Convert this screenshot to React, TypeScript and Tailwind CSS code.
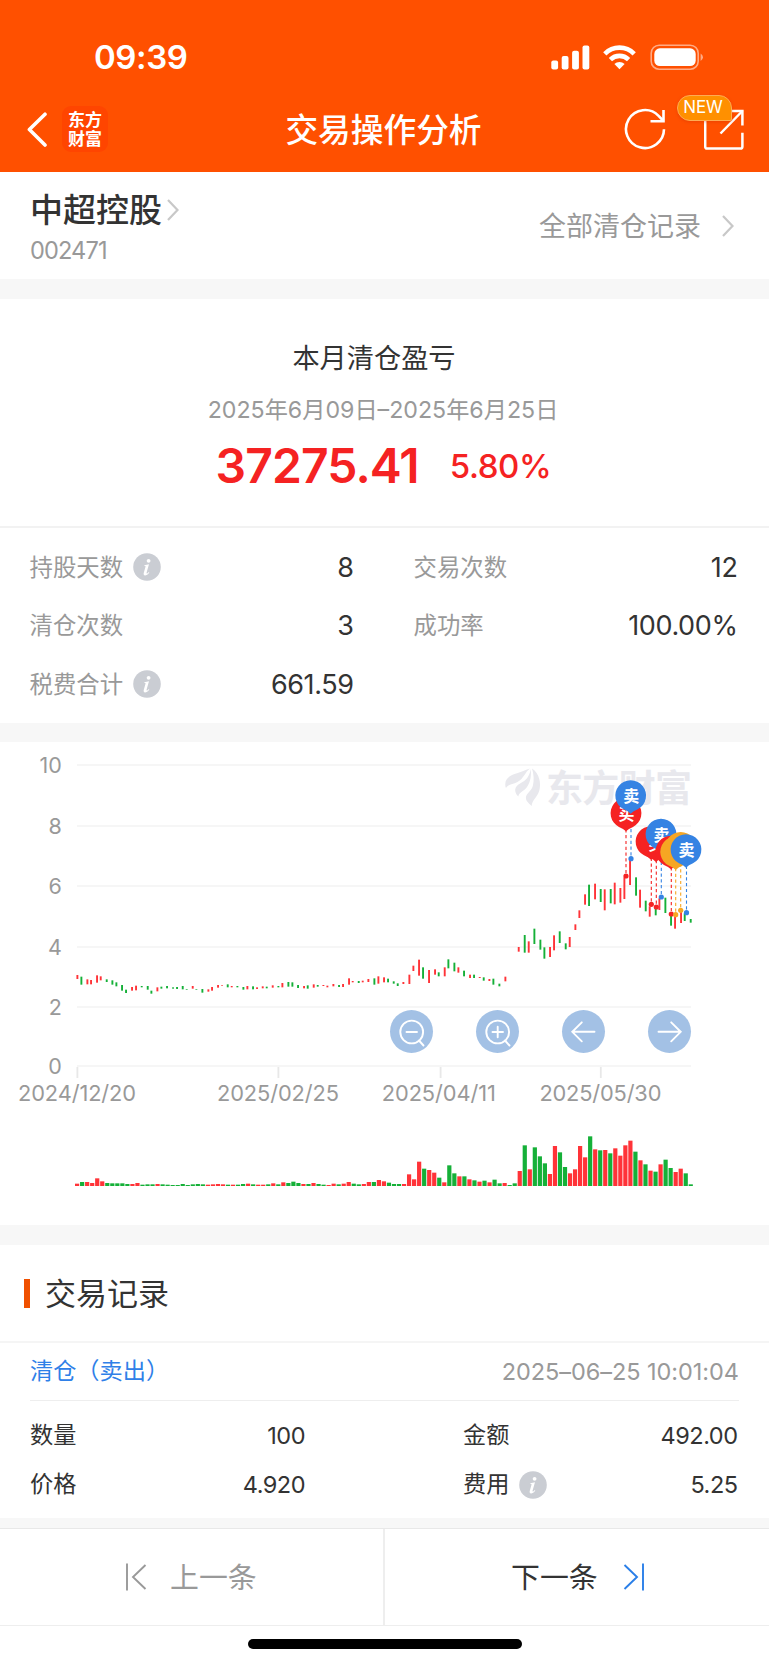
import type { ReactNode } from "react";

const RED = "#ff3338";
const GREEN = "#15b038";

type Tone = "r" | "g";
type Mark = [number, number, number, Tone];

const spring: Mark[] = [
  [52, 75, 87, "r"], [64, 80, 104, "g"], [82, 88, 103, "r"], [93, 90, 103, "r"], [111, 76, 98, "r"],
  [122, 79, 91, "r"], [140, 88, 96, "g"], [157, 91, 104, "g"], [169, 97, 109, "g"], [186, 105, 122, "g"],
  [198, 119, 129, "g"], [216, 111, 122, "r"], [228, 107, 121, "r"], [245, 108, 112, "g"], [263, 108, 119, "g"],
  [274, 122, 131, "g"], [292, 112, 124, "r"], [304, 110, 116, "g"], [321, 108, 115, "g"], [339, 112, 116, "g"],
  [351, 111, 117, "g"], [368, 108, 118, "g"], [380, 117, 119, "g"], [398, 108, 116, "r"], [409, 117, 119, "g"],
  [427, 117, 128, "g"], [445, 118, 125, "r"], [456, 111, 122, "r"], [474, 105, 113, "r"], [486, 105, 107, "r"],
  [503, 103, 112, "g"], [515, 108, 112, "r"], [532, 108, 112, "g"], [550, 111, 119, "g"], [562, 108, 118, "r"],
  [579, 109, 118, "g"], [591, 112, 117, "r"], [608, 109, 115, "r"], [620, 110, 115, "g"], [638, 106, 113, "r"],
  [655, 108, 112, "g"], [667, 99, 112, "r"], [685, 96, 110, "g"], [697, 97, 110, "g"], [714, 105, 114, "g"],
  [732, 108, 115, "r"], [743, 106, 116, "g"], [761, 103, 113, "r"], [773, 105, 110, "g"], [790, 105, 108, "r"],
  [802, 107, 112, "r"], [820, 102, 109, "r"], [837, 105, 111, "g"], [849, 102, 111, "r"], [867, 85, 104, "r"],
  [878, 93, 97, "r"], [896, 93, 99, "g"], [908, 92, 97, "r"], [925, 87, 96, "r"], [943, 85, 104, "g"],
  [955, 79, 101, "r"], [972, 82, 97, "r"], [984, 86, 97, "g"],
];

const summer: Mark[] = [
  [41, 724, 731, "g"], [53, 730, 738, "g"], [70, 726, 732, "r"], [88, 704, 732, "r"], [100, 677, 693, "r"],
  [117, 659, 707, "r"], [129, 682, 716, "g"], [147, 690, 729, "r"], [165, 688, 704, "r"], [176, 697, 709, "g"],
  [194, 682, 709, "r"], [205, 658, 685, "g"], [223, 668, 694, "g"], [235, 682, 698, "r"], [252, 692, 709, "g"],
  [270, 704, 714, "r"], [282, 704, 714, "g"], [299, 711, 714, "r"], [311, 712, 722, "g"], [328, 717, 723, "r"],
  [340, 716, 734, "g"], [358, 731, 739, "g"], [376, 710, 724, "r"], [416, 621, 635, "r"], [434, 585, 638, "g"],
  [446, 604, 638, "r"], [463, 566, 612, "g"], [481, 599, 629, "g"], [493, 622, 656, "g"], [510, 621, 651, "r"],
  [522, 586, 631, "r"], [539, 574, 609, "g"], [557, 610, 628, "g"], [569, 591, 621, "r"], [586, 553, 570, "r"],
  [598, 511, 534, "r"], [615, 463, 494, "r"], [627, 434, 498, "g"], [645, 431, 478, "r"], [662, 447, 486, "g"],
  [674, 448, 511, "r"], [692, 447, 490, "g"], [704, 428, 493, "r"], [721, 444, 488, "r"], [733, 412, 477, "r"],
  [750, 358, 435, "r"], [768, 412, 467, "g"], [780, 449, 503, "r"], [797, 482, 514, "g"], [809, 499, 530, "r"],
  [827, 500, 526, "g"], [838, 475, 510, "r"], [856, 473, 519, "g"], [873, 520, 557, "g"], [885, 525, 566, "r"],
  [903, 515, 549, "r"], [914, 520, 543, "g"], [932, 537, 548, "g"],
];

const candles: Mark[] = [
  ...spring.map(([x, a, b, t]): Mark => [60 + x / 3, 208 + a / 3, 208 + b / 3, t]),
  ...summer.map(([x, a, b, t]): Mark => [380 + x / 3, a / 3 - 2, b / 3 - 2, t]),
];

const volumes =
  "7r 12g 12r 9r 23r 14r 9g 8g 8g 8g 6g 6r 9r 4g 5g 5g 6r 5g 4g 3g 3g 6g 3g 5g 6g 5g 4r 5r 6r 5r 4g 4r 4g 6g 7r 5g 4r 4r 5g 8r 5g 11r 9g 13g 9g 6r 6g 9r 6g 4g 3r 7r 5g 7r 12r 7g 5g 6r 12r 12g 18r 14r 10g 6g 6g 6r 35r 20r 73r 52g 48r 40r 25g 11r 62g 38g 29r 29g 20r 17g 13r 16g 11r 19g 8g 9r 3g 8g 45r 122g 50r 116g 89g 68g 36r 120r 101g 57g 38r 50r 120r 86r 149g 110r 107g 108r 98g 113r 91r 122r 136r 103g 77r 65g 46r 43g 65r 79g 54g 42r 52r 38g 5g"
    .split(" ")
    .map((v) => ({ h: parseInt(v, 10) / 3, tone: v.endsWith("r") ? RED : GREEN }));

const PIN_RED = "#f52222";
const PIN_BLUE = "#3583e3";
const PIN_ORANGE = "#f6a623";

const pins = [
  { x: 626, y: 71.3, dx: 626, dy: 134, c: PIN_RED, t: "买" },
  { x: 630.7, y: 53.7, dx: 631, dy: 116.7, c: PIN_BLUE, t: "卖" },
  { x: 651, y: 99.7, dx: 651.3, dy: 162.3, c: PIN_RED, t: "" },
  { x: 656, y: 102, dx: 656.3, dy: 165, c: PIN_RED, t: "买" },
  { x: 661, y: 92.3, dx: 661.3, dy: 155, c: PIN_BLUE, t: "卖" },
  { x: 671, y: 109.3, dx: 671.3, dy: 172, c: PIN_RED, t: "" },
  { x: 675.7, y: 110, dx: 675.7, dy: 172.7, c: PIN_ORANGE, t: "" },
  { x: 680.7, y: 105.5, dx: 680.7, dy: 168.3, c: PIN_ORANGE, t: "" },
  { x: 686, y: 107.7, dx: 686.5, dy: 170.7, c: PIN_BLUE, t: "卖" },
];

const levels = [
  { v: "10", y: 23 }, { v: "8", y: 84 }, { v: "6", y: 144 }, { v: "4", y: 205 }, { v: "2", y: 265 }, { v: "0", y: 324 },
];

const dates = [
  { t: "2024/12/20", x: 77.3, l: 77, w: 118 },
  { t: "2025/02/25", x: 278.3, l: 278, w: 122 },
  { t: "2025/04/11", x: 440.5, l: 438.8, w: 114 },
  { t: "2025/05/30", x: 600.7, l: 600.4, w: 122 },
];

function Info() {
  return (
    <svg className="block h-7 w-7 shrink-0" viewBox="0 0 28 28">
      <circle cx="14" cy="14" r="13.8" fill="#cacdd3" />
      <circle cx="15.6" cy="7.8" r="1.9" fill="#fff" />
      <path d="M11.2 12.2 C13 12 14.5 11.6 16 11.2 L13.6 19.6 C13.3 21 14.2 20.6 15.8 18.9 L16.3 19.4 C14.8 21.6 13.3 22.4 12.1 22.4 C10.6 22.4 10.4 21.3 10.8 19.8 L12.5 13.8 C12.7 13 12.3 12.8 11.1 12.8 Z" fill="#fff" />
    </svg>
  );
}

function Chevron({ className }: { className: string }) {
  return (
    <svg className={className} viewBox="0 0 12 22" fill="none" stroke="#c8c8c8" strokeWidth="2.2">
      <path d="M1 1 L10.5 11 L1 21" />
    </svg>
  );
}

function Header() {
  return (
    <header className="h-[172px] shrink-0 bg-[#ff5000] text-white">
      <div className="flex h-[86px] items-center justify-between pt-[29px] pr-[64px] pl-[94px]">
        <span className="text-[33px] leading-none font-semibold tracking-[-0.4px]">09:39</span>
        <div className="flex items-center">
          <svg className="h-[25px] w-[39px]" viewBox="0 0 39 25" fill="#fff">
            <rect x="0.3" y="15.5" width="6.8" height="9" rx="2" />
            <rect x="10.7" y="11" width="6.8" height="13.5" rx="2" />
            <rect x="21.1" y="5.7" width="6.8" height="18.8" rx="2" />
            <rect x="31.5" y="0.5" width="6.8" height="24" rx="2" />
          </svg>
          <svg className="ml-[13px] h-[25px] w-[33px]" viewBox="0 0 33 25" fill="none" stroke="#fff" strokeWidth="4.6">
            <path d="M1.8 8.8 C10 0.6 23 0.6 31.2 8.8" />
            <path d="M7.4 14.6 C12.5 9.6 20.5 9.6 25.6 14.6" />
            <path d="M11.4 19 C14.2 16.2 18.8 16.2 21.6 19 L16.5 24.2 Z" fill="#fff" stroke="none" />
          </svg>
          <svg className="ml-[14px] h-[27px] w-[55px]" viewBox="0 0 55 27">
            <rect x="1.2" y="1.2" width="47" height="24" rx="8" fill="none" stroke="#ffab85" strokeWidth="1.6" />
            <rect x="4.3" y="4.3" width="41.4" height="17.8" rx="5.6" fill="#fff" />
            <path d="M50.6 9.5 Q53 11 53 13.2 Q53 15.4 50.6 17 Z" fill="#ffab85" />
          </svg>
        </div>
      </div>
      <div className="flex h-[86px] items-center justify-between pr-[25px] pl-[26px]">
        <div className="flex w-[230px] items-center">
          <svg className="h-[36px] w-[22px]" viewBox="0 0 22 36" fill="none" stroke="#fff" strokeWidth="3.6" strokeLinecap="round" strokeLinejoin="round">
            <path d="M19 3.2 L3.4 18.5 L19 34" />
          </svg>
          <div className="ml-[14px] flex h-[46px] w-[46px] flex-col items-center justify-center rounded-[9px] bg-[#ff4500] pt-[1px] text-[17px] leading-[19px] font-bold">
            <span>东方</span>
            <span>财富</span>
          </div>
        </div>
        <h1 className="pt-[2px] pr-[3px] text-[32.7px] leading-none font-medium">交易操作分析</h1>
        <div className="flex w-[230px] items-center justify-end">
          <svg className="h-[42px] w-[42px]" viewBox="0 0 42 42" fill="none" stroke="#fff" strokeWidth="2.6">
            <path d="M40 21.3 A19 19 0 1 1 34.6 7.8 L39.5 13" />
            <path d="M39.5 2 L39.5 13.2 L26.5 13.2" />
          </svg>
          <div className="relative ml-[38px] h-[41px] w-[40px]">
            <svg className="h-[41px] w-[40px]" viewBox="0 0 40 41" fill="none" stroke="#fff" strokeWidth="2.5">
              <path d="M1.2 10 L1.2 37.5 Q1.2 39.6 3.2 39.6 L36.4 39.6 Q38.4 39.6 38.4 37.5 L38.4 23.7" />
              <path d="M26 2 L38.4 2 L38.4 16.5" />
              <path d="M38.4 2 L16.5 24.5" />
            </svg>
            <span className="absolute -top-[14px] -left-[27px] flex h-[26px] w-[55px] items-center justify-center rounded-[13px] rounded-br-[2px] border border-[#ffac52] bg-[#ff9000] pr-[3px] text-[17px] leading-none tracking-[-0.1px] shadow-[0_1px_3px_rgba(200,40,0,0.35)]">
              NEW
            </span>
          </div>
        </div>
      </div>
    </header>
  );
}

function Stat({ label, value, info }: { label: string; value: string; info?: boolean }) {
  return (
    <div className="flex h-[58.5px] items-center">
      <span className="text-[23.4px] text-[#999]">{label}</span>
      {info && <span className="ml-[10px]"><Info /></span>}
      <span className="ml-auto text-[27px] tracking-[-0.4px]">{value}</span>
    </div>
  );
}

function Field({ label, value, info }: { label: string; value: string; info?: boolean }) {
  return (
    <div className="flex h-[49px] items-center">
      <span className="text-[23.2px]">{label}</span>
      {info && <span className="ml-[10px]"><Info /></span>}
      <span className="ml-auto text-[23.5px] tracking-[-0.5px]">{value}</span>
    </div>
  );
}

function RoundButton({ label, children }: { label: string; children: ReactNode }) {
  return (
    <button aria-label={label} className="h-[43px] w-[43px] rounded-full bg-[#a3c1e5]">
      <svg className="h-[43px] w-[43px]" viewBox="0 0 43 43" fill="none" stroke="#fff" strokeWidth="1.9" strokeLinecap="round">
        {children}
      </svg>
    </button>
  );
}

function Chart() {
  return (
    <section className="relative h-[483px] shrink-0">
      <svg className="block h-[483px] w-[769px]" viewBox="0 0 769 483">
        {levels.map((l) => (
          <g key={l.v}>
            <rect x="77" y={l.y - 1} width="614" height="2" fill="#f6f6f6" />
            <text x="61.8" y={l.y + 7.8} textAnchor="end" fontSize="21.5" fill="#999">{l.v}</text>
          </g>
        ))}
        {dates.map((d) => (
          <g key={d.t}>
            <rect x={d.x - 0.8} y="325" width="1.8" height="11" fill="#e8e8e8" />
            <text x={d.l} y="359" textAnchor="middle" fontSize="21.8" fill="#999" textLength={d.w}>{d.t}</text>
          </g>
        ))}
        <g fill="#e8e8ed">
          <path d="M505.3 42.5 C505 36 511 33 517 31.2 C522 29.5 526 27.8 530 26.5 C525 30 524 36.5 517.5 40 C512.5 42.5 508.5 42 506 46 Q505.2 44.5 505.3 42.5 Z" />
          <path d="M530.7 27 C529.5 34.5 526 38.5 520.5 41.2 C514.3 44.5 513.5 49.5 518.3 54.5 C519 50 524 49.5 527 45 C530.5 40 531.5 33.5 530.7 27 Z" />
          <path d="M532 26.5 C539.5 31.5 541.3 41.5 539.3 48.5 C537.2 55.5 532.4 57.5 531.6 64 C528.2 60.8 525.3 58.5 526 54.8 C526.8 51 531 49.5 532.8 44 C534.3 38.5 533.8 32 532 26.5 Z" />
          <text x="546" y="60" fontSize="37" fontWeight="700" textLength="146">东方财富</text>
        </g>
        {candles.map(([x, a, b, t]) => (
          <rect key={x} x={x - 0.9} y={a} width="1.9" height={b - a} fill={t === "r" ? RED : GREEN} />
        ))}
        {volumes.map((v, i) => (
          <rect key={i} x={75 + i * 5.03} y={444 - v.h} width="4.2" height={v.h} fill={v.tone} />
        ))}
        {pins.map((p) => (
          <g key={p.dx}>
            <path d={`M${p.dx} ${p.y + 16} V${p.dy}`} stroke={p.c} strokeWidth="1.1" strokeDasharray="3.2 2.6" />
            <circle cx={p.dx} cy={p.dy} r="2.6" fill={p.c} />
          </g>
        ))}
        {pins.map((p) => (
          <g key={p.dx}>
            <path
              d={`M${p.x} ${p.y + 18} Q${p.x - 2.5} ${p.y + 15.2} ${p.x - 7} ${p.y + 13.6} A15.4 15.4 0 1 1 ${p.x + 7} ${p.y + 13.6} Q${p.x + 2.5} ${p.y + 15.2} ${p.x} ${p.y + 18} Z`}
              fill={p.c}
            />
            {p.t && (
              <text x={p.x + 0.6} y={p.y + 6.3} textAnchor="middle" fontSize="16" fontWeight="700" fill="#fff">{p.t}</text>
            )}
          </g>
        ))}
      </svg>
      <div className="absolute top-[268px] left-[390px] flex gap-[43px]">
        <RoundButton label="缩小">
          <circle cx="21.7" cy="22" r="11.4" />
          <path d="M16.5 22 H27 M29 30.5 L33.5 35.5" />
        </RoundButton>
        <RoundButton label="放大">
          <circle cx="21.7" cy="22" r="11.4" />
          <path d="M16.5 22 H27 M21.7 16.7 V27.3 M29 30.5 L33.5 35.5" />
        </RoundButton>
        <RoundButton label="左移">
          <path d="M32.5 21.8 H10.5 M19.8 12.3 L10.3 21.8 L19.8 31.3" />
        </RoundButton>
        <RoundButton label="右移">
          <path d="M10.5 21.8 H32.5 M23.2 12.3 L32.7 21.8 L23.2 31.3" />
        </RoundButton>
      </div>
    </section>
  );
}

export default function App() {
  return (
    <div className="flex h-[1665px] w-[769px] flex-col overflow-hidden bg-white font-[Inter,'Noto_Sans_CJK_SC',sans-serif] leading-none text-[#333]">
      <Header />
      <section className="flex h-[107px] shrink-0 justify-between pr-[35px] pl-[30px]">
        <div className="pt-[20px]">
          <div className="flex h-[36px] items-center">
            <span className="text-[33px] font-medium">中超控股</span>
            <Chevron className="ml-[5px] h-[22px] w-[12px]" />
          </div>
          <div className="mt-[11px] text-[23.6px] tracking-[-0.9px] text-[#999]">002471</div>
        </div>
        <div className="flex h-[108px] items-center text-[27px] text-[#999]">
          全部清仓记录
          <Chevron className="ml-[21px] h-[22px] w-[12px]" />
        </div>
      </section>
      <div className="h-[20px] shrink-0 bg-[#f7f7f7]" />
      <section className="flex h-[229px] shrink-0 flex-col items-center border-b-2 border-[#f2f2f2] pt-[46px]">
        <h2 className="pr-[21px] text-[27.2px] leading-[28px]">本月清仓盈亏</h2>
        <p className="mt-[23px] pr-[3px] text-[23.2px] leading-[28px] text-[#999]">2025年6月09日–2025年6月25日</p>
        <div className="mt-[17px] flex items-center gap-[31px] pr-[2px] leading-[50px] text-[#f52222]">
          <span className="text-[48px] font-semibold tracking-[-0.9px]">37275.41</span>
          <span className="text-[33px] font-medium tracking-[-0.4px]">5.80%</span>
        </div>
      </section>
      <section className="grid h-[195px] shrink-0 grid-cols-[324px_324px] content-start gap-x-[60px] pt-[10px] pl-[29.5px]">
        <Stat label="持股天数" value="8" info />
        <Stat label="交易次数" value="12" />
        <Stat label="清仓次数" value="3" />
        <Stat label="成功率" value="100.00%" />
        <Stat label="税费合计" value="661.59" info />
      </section>
      <div className="h-[19px] shrink-0 bg-[#f7f7f7]" />
      <Chart />
      <div className="h-[20px] shrink-0 bg-[#f7f7f7]" />
      <section className="flex h-[98px] shrink-0 items-center border-b-2 border-[#f5f5f5] pl-[24px]">
        <div className="h-[29px] w-[6px] bg-[#f05000]" />
        <h2 className="ml-[15px] text-[31px]">交易记录</h2>
      </section>
      <section className="h-[175px] shrink-0 px-[30px]">
        <div className="flex h-[58px] items-center justify-between border-b border-[#eee]">
          <span className="pt-[1px] text-[23.2px] text-[#2f80e8]">清仓（卖出）</span>
          <span className="text-[23.5px] tracking-[-0.05px] text-[#999]">2025–06–25 10:01:04</span>
        </div>
        <div className="grid grid-cols-[275px_274.5px] gap-x-[158px] pt-[10px]">
          <Field label="数量" value="100" />
          <Field label="金额" value="492.00" />
          <Field label="价格" value="4.920" />
          <Field label="费用" value="5.25" info />
        </div>
      </section>
      <div className="h-[11px] shrink-0 border-b border-[#e8e8e8] bg-[#f7f7f7]" />
      <nav className="flex h-[97px] shrink-0 border-b border-[#eee] text-[28.9px]">
        <button className="flex w-[385px] items-center border-r-2 border-[#eee] pl-[125px] text-[#999]">
          <svg className="h-[28px] w-[22px]" viewBox="0 0 22 28" fill="none" stroke="#999" strokeWidth="1.9">
            <path d="M2 0.5 V27.5 M20.5 2 L8 14 L20.5 26" />
          </svg>
          <span className="ml-[23px] pt-[2px]">上一条</span>
        </button>
        <button className="flex flex-1 items-center pl-[126px]">
          <span className="pt-[2px]">下一条</span>
          <svg className="ml-[25px] h-[28px] w-[22px]" viewBox="0 0 22 28" fill="none" stroke="#2a7fe8" strokeWidth="1.9">
            <path d="M20 0.5 V27.5 M1.5 2 L14 14 L1.5 26" />
          </svg>
        </button>
      </nav>
      <div className="mx-auto mt-[13px] h-[10px] w-[274px] shrink-0 rounded-full bg-black" />
    </div>
  );
}
